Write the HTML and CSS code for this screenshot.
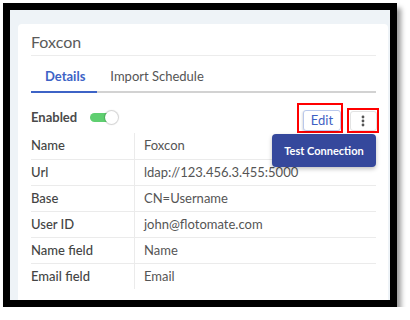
FILE: index.html
```html
<!DOCTYPE html>
<html>
<head>
<meta charset="utf-8">
<link rel="stylesheet" href="styles.css">
</head>
<body>
<div class="frame">
  <div class="card">
    <div class="title">Foxcon</div>
    <div class="tabs">
      <div class="tab active">Details</div>
      <div class="tab">Import Schedule</div>
    </div>
    <div class="toolbar">
      <div class="enabled">
        <span class="enabled-label">Enabled</span>
        <span class="toggle"><span class="knob"></span></span>
      </div>
      <div class="actions">
        <div class="mark mark-edit"><button class="btn-edit">Edit</button></div>
        <div class="mark mark-more">
          <button class="btn-more">
            <svg width="4" height="12" viewBox="0 0 4 12"><circle cx="2" cy="2" r="1.4" fill="#555"/><circle cx="2" cy="6" r="1.4" fill="#555"/><circle cx="2" cy="10" r="1.4" fill="#555"/></svg>
          </button>
        </div>
        <div class="menu">Test Connection</div>
      </div>
    </div>
    <div class="table">
      <div class="row"><div class="label">Name</div><div class="value">Foxcon</div></div>
      <div class="row"><div class="label">Url</div><div class="value">ldap://123.456.3.455:5000</div></div>
      <div class="row"><div class="label">Base</div><div class="value">CN=Username</div></div>
      <div class="row"><div class="label">User ID</div><div class="value">john@flotomate.com</div></div>
      <div class="row"><div class="label">Name field</div><div class="value">Name</div></div>
      <div class="row"><div class="label">Email field</div><div class="value">Email</div></div>
    </div>
  </div>
</div>
</body>
</html>
```

FILE: styles.css
```css
* { box-sizing: border-box; }
html, body { margin: 0; padding: 0; background: #fff; }
body { font-family: Lato, "Open Sans", sans-serif; color: #4f4f4f; }

.frame {
  margin: 3px 0 0 3px;
  width: 394px;
  height: 304px;
  border: 7px solid #000;
  background: #eef3f7;
  padding: 14px 2px 0 8px;
  box-shadow: 4px 5px 5px rgba(0,0,0,0.4);
  overflow: hidden;
}

.card {
  background: #fff;
  border-radius: 4px 4px 0 0;
  height: 100%;
  padding: 8px 12px 0 13px;
}

.title {
  font-size: 16px;
  line-height: 20px;
  color: #5a5a5a;
  padding-bottom: 3px;
  border-bottom: 1px solid #ececec;
}

.tabs {
  display: flex;
  border-bottom: 2px solid #d2d2d2;
}
.tab {
  font-size: 13px;
  line-height: 16px;
  padding: 12px 13px 7px 13px;
  color: #555;
  margin-bottom: -2px;
  border-bottom: 2px solid transparent;
}
.tab.active {
  color: #3d63c6;
  font-weight: 700;
  border-bottom-color: #3d63c6;
  padding-left: 14px;
  padding-right: 12px;
}

.toolbar {
  display: flex;
  justify-content: space-between;
  align-items: flex-end;
  height: 40px;
  margin-right: -3px;
}
.enabled {
  display: flex;
  align-items: center;
  gap: 13px;
  padding-bottom: 8px;
}
.enabled-label {
  font-size: 13px;
  font-weight: 700;
  line-height: 16px;
  color: #4a4a4a;
}
.toggle {
  position: relative;
  width: 27px;
  height: 9px;
  border-radius: 5px;
  background: #5fcf70;
  display: inline-block;
}
.knob {
  position: absolute;
  right: -1px;
  top: -2px;
  width: 13px;
  height: 13px;
  border-radius: 50%;
  background: #fff;
  box-shadow: 0 0 1px 1px rgba(0,0,0,0.18);
}

.actions {
  position: relative;
  display: flex;
  align-items: flex-end;
  gap: 4px;
}
.mark {
  border: 2px solid #f00;
}
.mark-edit { padding: 5px 0 0 4px; }
.mark-more { padding: 1px 0 0 1px; }
.btn-edit {
  display: block;
  width: 38px;
  height: 21px;
  padding: 0;
  border: 1px solid #b9c8ec;
  border-radius: 3px;
  background: #fff;
  color: #3e5fc3;
  font-family: Lato, sans-serif;
  font-size: 13px;
  line-height: 19px;
  box-shadow: -1px 1px 2px rgba(0,0,0,0.12);
}
.btn-more {
  display: flex;
  align-items: center;
  justify-content: center;
  width: 27px;
  height: 20px;
  padding: 0 2px 0 0;
  border: 1px solid #e3e3e3;
  border-radius: 3px;
  background: #fff;
}
.menu {
  position: absolute;
  right: 3px;
  top: 31px;
  width: 104px;
  height: 33px;
  border-radius: 4px;
  background: #35489c;
  color: #fff;
  font-size: 11px;
  font-weight: 700;
  display: flex;
  align-items: center;
  justify-content: center;
  box-shadow: 0 2px 4px rgba(0,0,0,0.25);
  z-index: 2;
}

.row {
  display: flex;
  height: 26px;
  border-bottom: 1px solid #ebebeb;
}
.row:first-child { height: 27px; }
.row:last-child { border-bottom: none; height: 25px; }
.label {
  width: 104px;
  border-right: 1px solid #ebebeb;
  font-size: 13px;
  font-weight: 500;
  line-height: 25px;
  color: #444;
}
.value {
  padding-left: 9px;
  font-size: 13px;
  line-height: 25px;
  color: #555;
}
```
